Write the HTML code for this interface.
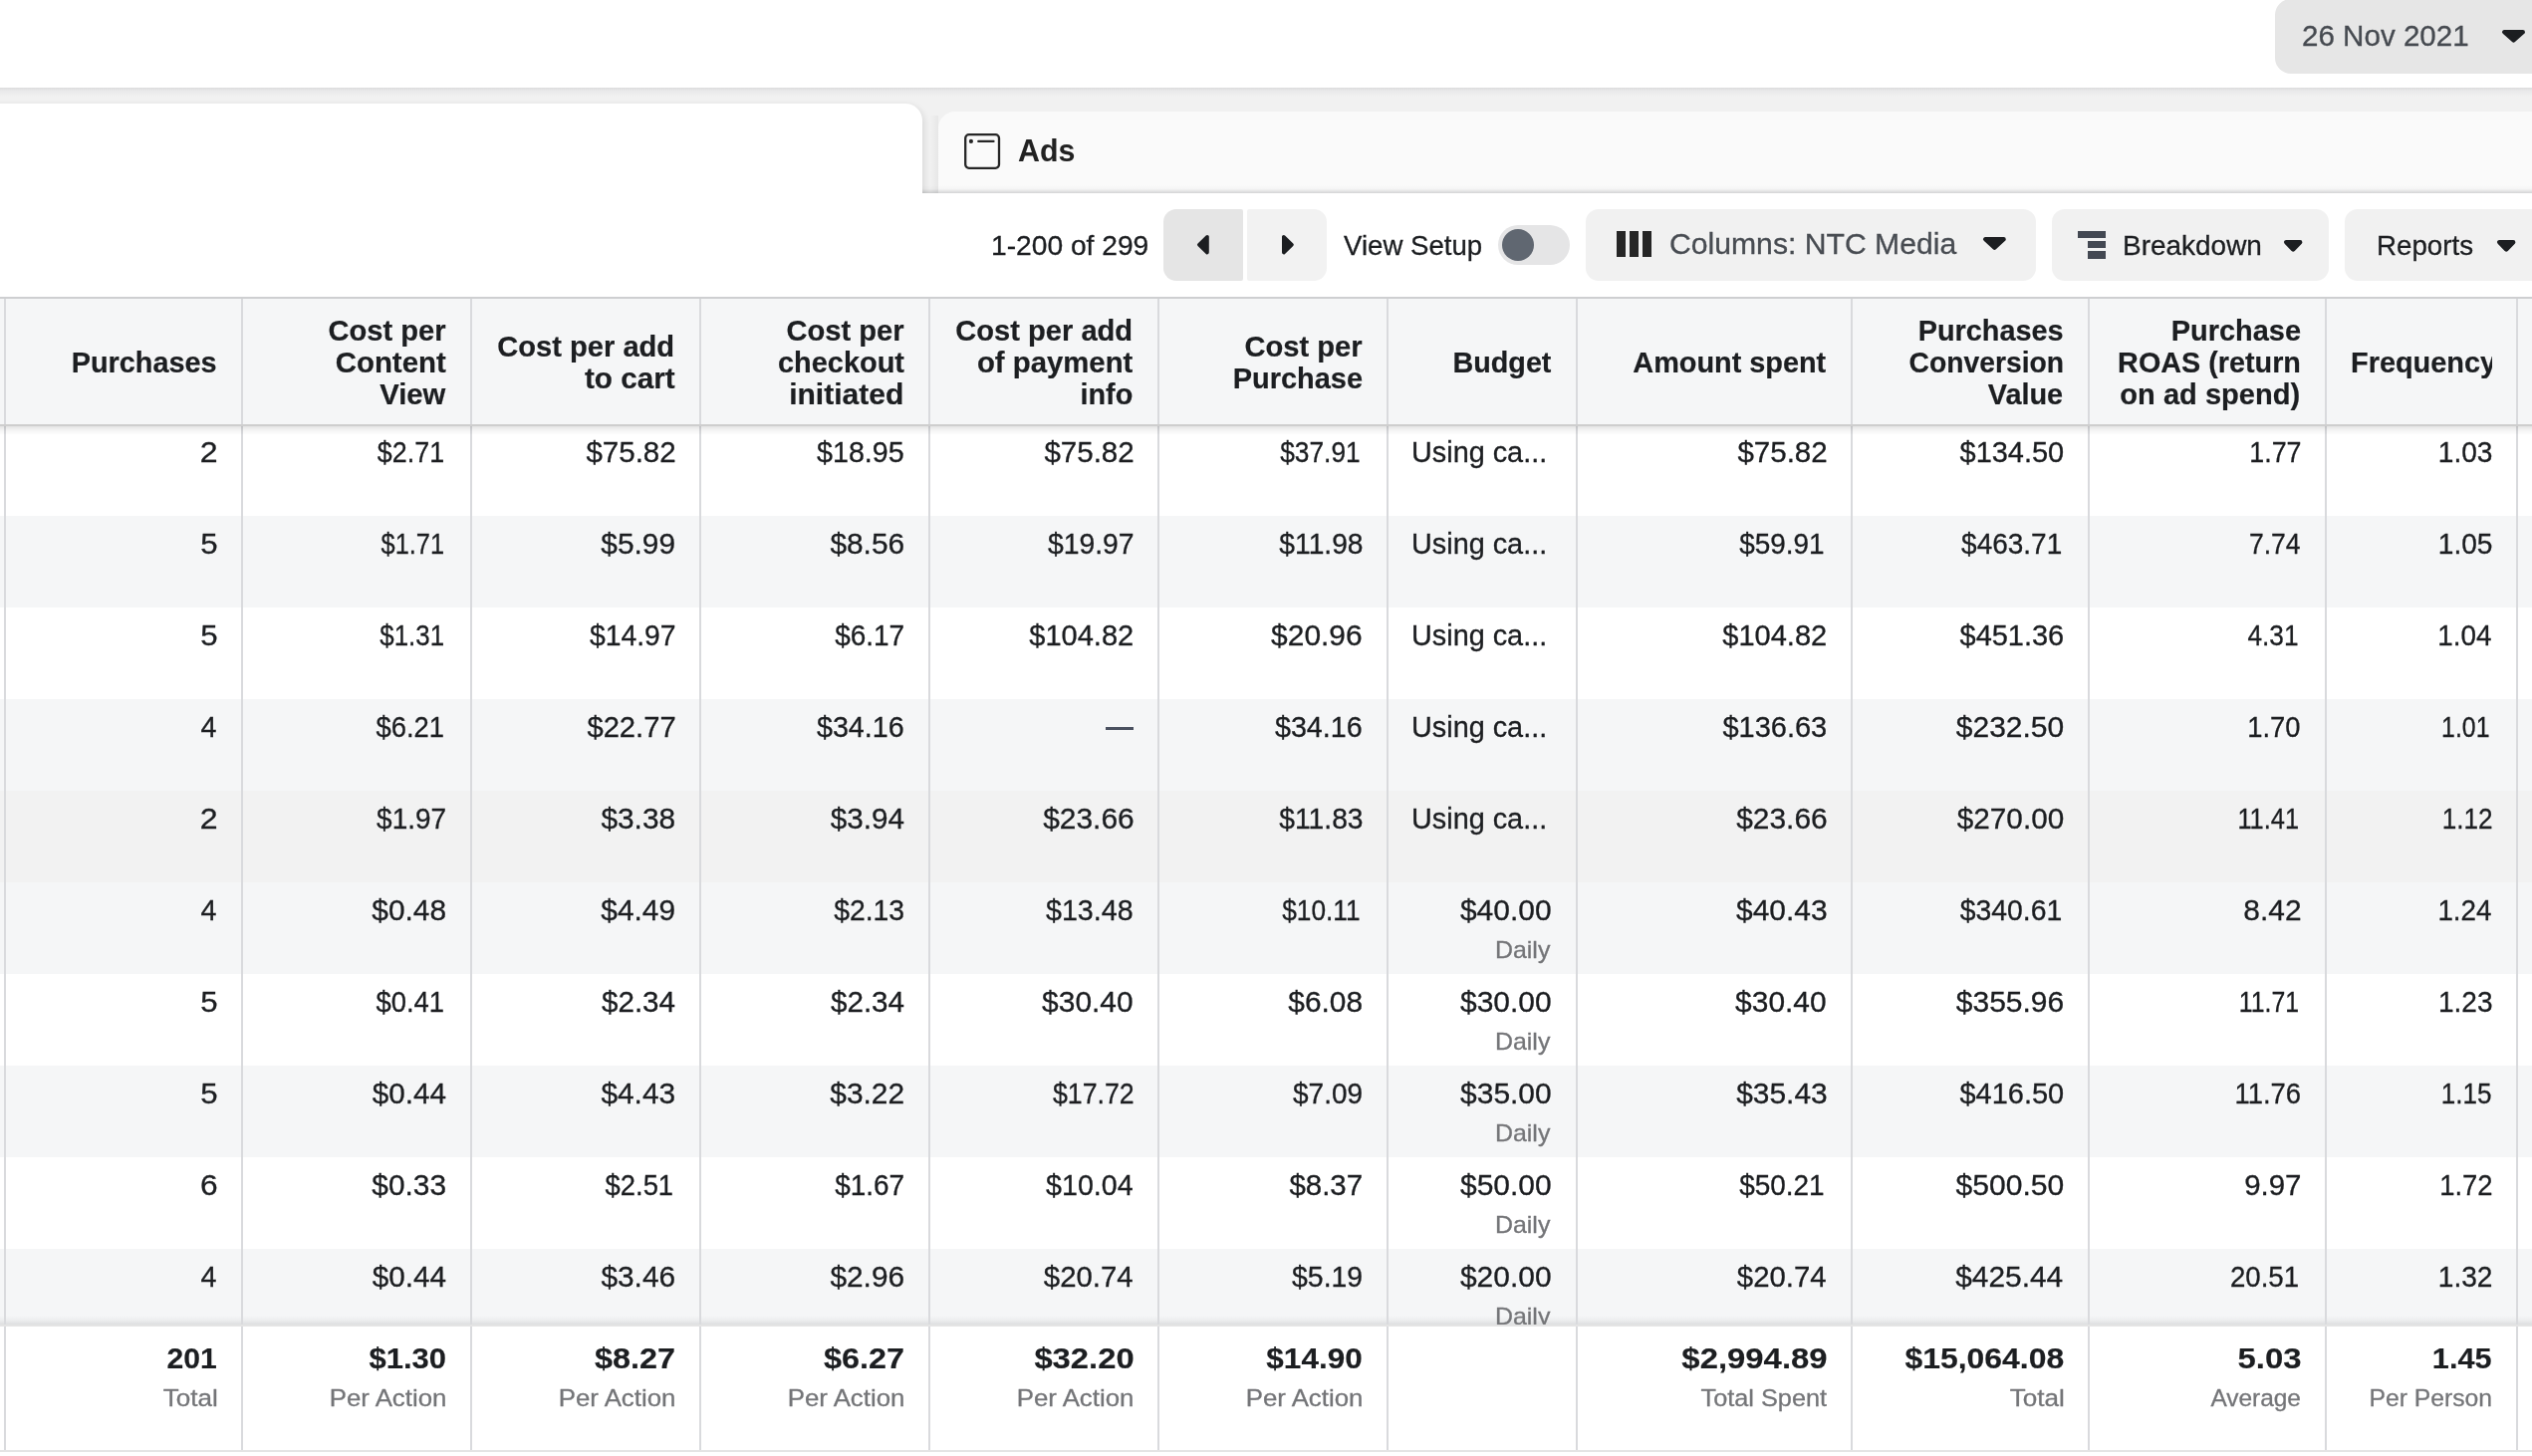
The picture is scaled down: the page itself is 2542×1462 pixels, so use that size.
<!DOCTYPE html><html><head><meta charset="utf-8"><title>Ads</title><style>

html,body{margin:0;padding:0;}
html{overflow:hidden;}
body{width:2542px;height:1462px;overflow:hidden;background:#fff;font-family:"Liberation Sans", sans-serif;position:relative;}
.t{position:absolute;white-space:nowrap;}
.a{position:absolute;}

</style></head><body><div id="wrap" style="position:absolute;left:0;top:0;width:2542px;height:1462px;overflow:hidden;will-change:transform;">
<div class="a" style="left:2284px;top:-1px;width:300px;height:75px;border-radius:16px;background:#e6e6e6;"></div>
<div class="t" id="t1" style="top:21.11px;font-size:30px;line-height:30px;color:#464a50;left:2311.00px;transform-origin:0 84.65%;transform:scale(0.9857,1.000);-webkit-text-stroke:0.3px #464a50;">26 Nov 2021</div>
<svg class="a" style="left:2510.0px;top:28.2px" width="27.0" height="16.4" viewBox="2510.0 28.2 27.0 16.4"><path d="M2514.20 32.40L2532.80 32.40L2523.50 40.62Z" fill="#1c1e21" stroke="#1c1e21" stroke-width="4.4" stroke-linejoin="round"/></svg>
<div class="a" style="left:0;top:88px;width:2542px;height:106px;background:#f1f1f1;"></div>
<div class="a" style="left:0;top:88px;width:2542px;height:9px;background:linear-gradient(#dcdcdd,#e9e9ea 35%,#f1f1f1);"></div>
<div class="a" style="left:0;top:88px;width:2542px;height:106px;overflow:hidden;"><div class="a" style="left:-20px;top:16px;width:946px;height:120px;border-radius:0 17px 0 0;background:#fff;box-shadow:2px 2px 7px rgba(0,0,0,0.10);"></div></div>
<div class="a" style="left:942px;top:112px;width:1700px;height:82px;border-radius:17px 0 0 0;background:#fafafa;"></div>
<div class="a" style="left:926px;top:186px;width:1616px;height:8px;background:linear-gradient(rgba(0,0,0,0),rgba(10,12,20,0.02) 45%,rgba(10,12,20,0.16));"></div>
<div class="a" style="left:934px;top:116px;width:8px;height:78px;background:linear-gradient(90deg,rgba(0,0,0,0),rgba(0,0,0,0.045));"></div>
<svg class="a" style="left:966px;top:132px" width="40" height="40" viewBox="966 132 40 40"><rect x="969.2" y="135.2" width="33.8" height="33.6" rx="3.6" ry="3.6" fill="none" stroke="#262626" stroke-width="2.3"/><circle cx="974.9" cy="141.9" r="2.1" fill="#262626"/><path d="M982.2 141.9H997.6" stroke="#262626" stroke-width="2.1" stroke-linecap="round"/></svg>
<div class="t" id="t2" style="top:134.71px;font-size:32px;line-height:32px;color:#222;font-weight:700;left:1021.50px;transform-origin:0 84.65%;transform:scale(0.9495,1.000);">Ads</div>
<div class="t" id="t3" style="top:232.50px;font-size:28px;line-height:28px;color:#1c1e21;left:995.00px;transform-origin:0 84.65%;transform:scale(1.0065,1.000);-webkit-text-stroke:0.3px #1c1e21;">1-200 of 299</div>
<div class="a" style="left:1168px;top:210px;width:80px;height:72px;border-radius:13px 2px 2px 13px;background:#e5e5e5;"></div>
<div class="a" style="left:1252px;top:210px;width:80px;height:72px;border-radius:2px 13px 13px 2px;background:#f2f2f2;"></div>
<svg class="a" style="left:1199.7px;top:234.3px" width="15.8" height="23.4" viewBox="1199.7 234.3 15.8 23.4"><path d="M1211.70 238.10L1211.70 253.90L1203.50 246.00Z" fill="#1c1e21" stroke="#1c1e21" stroke-width="3.6" stroke-linejoin="round"/></svg>
<svg class="a" style="left:1284.7px;top:234.3px" width="15.8" height="23.4" viewBox="1284.7 234.3 15.8 23.4"><path d="M1288.50 238.10L1288.50 253.90L1296.70 246.00Z" fill="#1c1e21" stroke="#1c1e21" stroke-width="3.6" stroke-linejoin="round"/></svg>
<div class="t" id="t4" style="top:232.50px;font-size:28px;line-height:28px;color:#1c1e21;left:1349.00px;transform-origin:0 84.65%;transform:scale(0.9857,1.000);-webkit-text-stroke:0.3px #1c1e21;">View Setup</div>
<div class="a" style="left:1504px;top:226px;width:72px;height:40px;border-radius:20px;background:#e5e5e6;"></div>
<div class="a" style="left:1508px;top:230px;width:32px;height:32px;border-radius:16px;background:#606771;"></div>
<div class="a" style="left:1592px;top:210px;width:452px;height:72px;border-radius:13px;background:#f1f1f1;"></div>
<div class="a" style="left:1622.7px;top:231.7px;width:8.9px;height:26px;background:#262626;"></div>
<div class="a" style="left:1635.9px;top:231.7px;width:8.9px;height:26px;background:#262626;"></div>
<div class="a" style="left:1649.1px;top:231.7px;width:8.9px;height:26px;background:#262626;"></div>
<div class="t" id="t5" style="top:229.91px;font-size:30px;line-height:30px;color:#484c52;left:1676.00px;transform-origin:0 84.65%;transform:scale(1.0049,1.000);-webkit-text-stroke:0.3px #484c52;">Columns: NTC Media</div>
<svg class="a" style="left:1988.9px;top:236.0px" width="26.8" height="16.6" viewBox="1988.9 236.0 26.8 16.6"><path d="M1993.10 240.20L2011.50 240.20L2002.30 248.62Z" fill="#1c1e21" stroke="#1c1e21" stroke-width="4.4" stroke-linejoin="round"/></svg>
<div class="a" style="left:2060px;top:210px;width:278px;height:72px;border-radius:13px;background:#f1f1f1;"></div>
<div class="a" style="left:2086px;top:232px;width:28.1px;height:7.4px;background:#434852;"></div>
<div class="a" style="left:2096.1px;top:242.1px;width:18px;height:7.4px;background:#434852;"></div>
<div class="a" style="left:2096.1px;top:252.3px;width:18px;height:7.5px;background:#434852;"></div>
<div class="t" id="t6" style="top:232.90px;font-size:28px;line-height:28px;color:#1c1e21;left:2131.00px;transform-origin:0 84.65%;transform:scale(0.9985,1.000);-webkit-text-stroke:0.3px #1c1e21;">Breakdown</div>
<svg class="a" style="left:2290.8px;top:239.1px" width="22.4" height="15.4" viewBox="2290.8 239.1 22.4 15.4"><path d="M2295.00 243.30L2309.00 243.30L2302.00 250.52Z" fill="#1c1e21" stroke="#1c1e21" stroke-width="4.4" stroke-linejoin="round"/></svg>
<div class="a" style="left:2354px;top:210px;width:300px;height:72px;border-radius:13px;background:#f1f1f1;"></div>
<div class="t" id="t7" style="top:232.90px;font-size:28px;line-height:28px;color:#1c1e21;left:2386.00px;transform-origin:0 84.65%;transform:scale(0.9895,1.000);-webkit-text-stroke:0.3px #1c1e21;">Reports</div>
<svg class="a" style="left:2504.9px;top:239.1px" width="22.4" height="15.4" viewBox="2504.9 239.1 22.4 15.4"><path d="M2509.10 243.30L2523.10 243.30L2516.10 250.52Z" fill="#1c1e21" stroke="#1c1e21" stroke-width="4.4" stroke-linejoin="round"/></svg>
<div class="a" style="left:0;top:298px;width:2542px;height:128px;background:#f5f6f7;"></div>
<div class="a" style="left:0;top:518px;width:2542px;height:92px;background:#f5f6f7;"></div>
<div class="a" style="left:0;top:702px;width:2542px;height:92px;background:#f5f6f7;"></div>
<div class="a" style="left:0;top:794px;width:2542px;height:92px;background:#f2f2f2;"></div>
<div class="a" style="left:0;top:886px;width:2542px;height:92px;background:#f5f6f7;"></div>
<div class="a" style="left:0;top:1070px;width:2542px;height:92px;background:#f5f6f7;"></div>
<div class="a" style="left:0;top:1254px;width:2542px;height:92px;background:#f5f6f7;"></div>
<div class="a" style="left:0;top:1321px;width:2542px;height:9px;background:linear-gradient(rgba(0,0,0,0),rgba(10,12,20,0.035) 50%,rgba(10,12,20,0.10));"></div>
<div class="t" id="t8" style="top:440.50px;font-size:28px;line-height:28px;color:#1c1e21;right:2323.60px;transform-origin:100% 84.65%;transform:scale(1.1466,1.035);-webkit-text-stroke:0.3px #1c1e21;">2</div>
<div class="t" id="t9" style="top:440.50px;font-size:28px;line-height:28px;color:#1c1e21;right:2096.32px;transform-origin:100% 84.65%;transform:scale(0.9592,1.035);-webkit-text-stroke:0.3px #1c1e21;">$2.71</div>
<div class="t" id="t10" style="top:440.50px;font-size:28px;line-height:28px;color:#1c1e21;right:1863.77px;transform-origin:100% 84.65%;transform:scale(1.0537,1.035);-webkit-text-stroke:0.3px #1c1e21;">$75.82</div>
<div class="t" id="t11" style="top:440.50px;font-size:28px;line-height:28px;color:#1c1e21;right:1633.98px;transform-origin:100% 84.65%;transform:scale(1.0230,1.035);-webkit-text-stroke:0.3px #1c1e21;">$18.95</div>
<div class="t" id="t12" style="top:440.50px;font-size:28px;line-height:28px;color:#1c1e21;right:1403.77px;transform-origin:100% 84.65%;transform:scale(1.0537,1.035);-webkit-text-stroke:0.3px #1c1e21;">$75.82</div>
<div class="t" id="t13" style="top:440.50px;font-size:28px;line-height:28px;color:#1c1e21;right:1176.35px;transform-origin:100% 84.65%;transform:scale(0.9396,1.035);-webkit-text-stroke:0.3px #1c1e21;">$37.91</div>
<div class="t" id="t14" style="top:440.50px;font-size:28px;line-height:28px;color:#1c1e21;left:1416.50px;transform-origin:0 84.65%;transform:scale(1.0295,1.035);-webkit-text-stroke:0.3px #1c1e21;">Using ca...</div>
<div class="t" id="t15" style="top:440.50px;font-size:28px;line-height:28px;color:#1c1e21;right:707.77px;transform-origin:100% 84.65%;transform:scale(1.0537,1.035);-webkit-text-stroke:0.3px #1c1e21;">$75.82</div>
<div class="t" id="t16" style="top:440.50px;font-size:28px;line-height:28px;color:#1c1e21;right:470.07px;transform-origin:100% 84.65%;transform:scale(1.0342,1.035);-webkit-text-stroke:0.3px #1c1e21;">$134.50</div>
<div class="t" id="t17" style="top:440.50px;font-size:28px;line-height:28px;color:#1c1e21;right:231.69px;transform-origin:100% 84.65%;transform:scale(0.9582,1.035);-webkit-text-stroke:0.3px #1c1e21;">1.77</div>
<div class="t" id="t18" style="top:440.50px;font-size:28px;line-height:28px;color:#1c1e21;right:39.96px;transform-origin:100% 84.65%;transform:scale(1.0035,1.035);-webkit-text-stroke:0.3px #1c1e21;">1.03</div>
<div class="t" id="t19" style="top:532.50px;font-size:28px;line-height:28px;color:#1c1e21;right:2323.85px;transform-origin:100% 84.65%;transform:scale(1.1124,1.035);-webkit-text-stroke:0.3px #1c1e21;">5</div>
<div class="t" id="t20" style="top:532.50px;font-size:28px;line-height:28px;color:#1c1e21;right:2096.37px;transform-origin:100% 84.65%;transform:scale(0.9064,1.035);-webkit-text-stroke:0.3px #1c1e21;">$1.71</div>
<div class="t" id="t21" style="top:532.50px;font-size:28px;line-height:28px;color:#1c1e21;right:1863.77px;transform-origin:100% 84.65%;transform:scale(1.0668,1.035);-webkit-text-stroke:0.3px #1c1e21;">$5.99</div>
<div class="t" id="t22" style="top:532.50px;font-size:28px;line-height:28px;color:#1c1e21;right:1633.85px;transform-origin:100% 84.65%;transform:scale(1.0654,1.035);-webkit-text-stroke:0.3px #1c1e21;">$8.56</div>
<div class="t" id="t23" style="top:532.50px;font-size:28px;line-height:28px;color:#1c1e21;right:1403.59px;transform-origin:100% 84.65%;transform:scale(1.0131,1.035);-webkit-text-stroke:0.3px #1c1e21;">$19.97</div>
<div class="t" id="t24" style="top:532.50px;font-size:28px;line-height:28px;color:#1c1e21;right:1173.94px;transform-origin:100% 84.65%;transform:scale(1.0079,1.035);-webkit-text-stroke:0.3px #1c1e21;">$11.98</div>
<div class="t" id="t25" style="top:532.50px;font-size:28px;line-height:28px;color:#1c1e21;left:1416.50px;transform-origin:0 84.65%;transform:scale(1.0295,1.035);-webkit-text-stroke:0.3px #1c1e21;">Using ca...</div>
<div class="t" id="t26" style="top:532.50px;font-size:28px;line-height:28px;color:#1c1e21;right:710.24px;transform-origin:100% 84.65%;transform:scale(0.9967,1.035);-webkit-text-stroke:0.3px #1c1e21;">$59.91</div>
<div class="t" id="t27" style="top:532.50px;font-size:28px;line-height:28px;color:#1c1e21;right:472.24px;transform-origin:100% 84.65%;transform:scale(0.9990,1.035);-webkit-text-stroke:0.3px #1c1e21;">$463.71</div>
<div class="t" id="t28" style="top:532.50px;font-size:28px;line-height:28px;color:#1c1e21;right:232.42px;transform-origin:100% 84.65%;transform:scale(0.9459,1.035);-webkit-text-stroke:0.3px #1c1e21;">7.74</div>
<div class="t" id="t29" style="top:532.50px;font-size:28px;line-height:28px;color:#1c1e21;right:39.98px;transform-origin:100% 84.65%;transform:scale(1.0035,1.035);-webkit-text-stroke:0.3px #1c1e21;">1.05</div>
<div class="t" id="t30" style="top:624.50px;font-size:28px;line-height:28px;color:#1c1e21;right:2323.85px;transform-origin:100% 84.65%;transform:scale(1.1124,1.035);-webkit-text-stroke:0.3px #1c1e21;">5</div>
<div class="t" id="t31" style="top:624.50px;font-size:28px;line-height:28px;color:#1c1e21;right:2096.36px;transform-origin:100% 84.65%;transform:scale(0.9241,1.035);-webkit-text-stroke:0.3px #1c1e21;">$1.31</div>
<div class="t" id="t32" style="top:624.50px;font-size:28px;line-height:28px;color:#1c1e21;right:1863.62px;transform-origin:100% 84.65%;transform:scale(1.0126,1.035);-webkit-text-stroke:0.3px #1c1e21;">$14.97</div>
<div class="t" id="t33" style="top:624.50px;font-size:28px;line-height:28px;color:#1c1e21;right:1633.64px;transform-origin:100% 84.65%;transform:scale(0.9977,1.035);-webkit-text-stroke:0.3px #1c1e21;">$6.17</div>
<div class="t" id="t34" style="top:624.50px;font-size:28px;line-height:28px;color:#1c1e21;right:1403.79px;transform-origin:100% 84.65%;transform:scale(1.0369,1.035);-webkit-text-stroke:0.3px #1c1e21;">$104.82</div>
<div class="t" id="t35" style="top:624.50px;font-size:28px;line-height:28px;color:#1c1e21;right:1173.89px;transform-origin:100% 84.65%;transform:scale(1.0688,1.035);-webkit-text-stroke:0.3px #1c1e21;">$20.96</div>
<div class="t" id="t36" style="top:624.50px;font-size:28px;line-height:28px;color:#1c1e21;left:1416.50px;transform-origin:0 84.65%;transform:scale(1.0295,1.035);-webkit-text-stroke:0.3px #1c1e21;">Using ca...</div>
<div class="t" id="t37" style="top:624.50px;font-size:28px;line-height:28px;color:#1c1e21;right:707.79px;transform-origin:100% 84.65%;transform:scale(1.0369,1.035);-webkit-text-stroke:0.3px #1c1e21;">$104.82</div>
<div class="t" id="t38" style="top:624.50px;font-size:28px;line-height:28px;color:#1c1e21;right:469.92px;transform-origin:100% 84.65%;transform:scale(1.0341,1.035);-webkit-text-stroke:0.3px #1c1e21;">$451.36</div>
<div class="t" id="t39" style="top:624.50px;font-size:28px;line-height:28px;color:#1c1e21;right:234.36px;transform-origin:100% 84.65%;transform:scale(0.9370,1.035);-webkit-text-stroke:0.3px #1c1e21;">4.31</div>
<div class="t" id="t40" style="top:624.50px;font-size:28px;line-height:28px;color:#1c1e21;right:40.38px;transform-origin:100% 84.65%;transform:scale(0.9954,1.035);-webkit-text-stroke:0.3px #1c1e21;">1.04</div>
<div class="t" id="t41" style="top:716.50px;font-size:28px;line-height:28px;color:#1c1e21;right:2324.36px;transform-origin:100% 84.65%;transform:scale(1.0261,1.035);-webkit-text-stroke:0.3px #1c1e21;">4</div>
<div class="t" id="t42" style="top:716.50px;font-size:28px;line-height:28px;color:#1c1e21;right:2096.28px;transform-origin:100% 84.65%;transform:scale(0.9782,1.035);-webkit-text-stroke:0.3px #1c1e21;">$6.21</div>
<div class="t" id="t43" style="top:716.50px;font-size:28px;line-height:28px;color:#1c1e21;right:1863.56px;transform-origin:100% 84.65%;transform:scale(1.0417,1.035);-webkit-text-stroke:0.3px #1c1e21;">$22.77</div>
<div class="t" id="t44" style="top:716.50px;font-size:28px;line-height:28px;color:#1c1e21;right:1633.90px;transform-origin:100% 84.65%;transform:scale(1.0241,1.035);-webkit-text-stroke:0.3px #1c1e21;">$34.16</div>
<div class="a" style="left:1110.0px;top:730.4px;width:28px;height:2.5px;background:#4b5160;"></div>
<div class="t" id="t45" style="top:716.50px;font-size:28px;line-height:28px;color:#1c1e21;right:1173.90px;transform-origin:100% 84.65%;transform:scale(1.0241,1.035);-webkit-text-stroke:0.3px #1c1e21;">$34.16</div>
<div class="t" id="t46" style="top:716.50px;font-size:28px;line-height:28px;color:#1c1e21;left:1416.50px;transform-origin:0 84.65%;transform:scale(1.0295,1.035);-webkit-text-stroke:0.3px #1c1e21;">Using ca...</div>
<div class="t" id="t47" style="top:716.50px;font-size:28px;line-height:28px;color:#1c1e21;right:707.89px;transform-origin:100% 84.65%;transform:scale(1.0347,1.035);-webkit-text-stroke:0.3px #1c1e21;">$136.63</div>
<div class="t" id="t48" style="top:716.50px;font-size:28px;line-height:28px;color:#1c1e21;right:470.03px;transform-origin:100% 84.65%;transform:scale(1.0710,1.035);-webkit-text-stroke:0.3px #1c1e21;">$232.50</div>
<div class="t" id="t49" style="top:716.50px;font-size:28px;line-height:28px;color:#1c1e21;right:232.12px;transform-origin:100% 84.65%;transform:scale(0.9768,1.035);-webkit-text-stroke:0.3px #1c1e21;">1.70</div>
<div class="t" id="t50" style="top:716.50px;font-size:28px;line-height:28px;color:#1c1e21;right:42.38px;transform-origin:100% 84.65%;transform:scale(0.8879,1.035);-webkit-text-stroke:0.3px #1c1e21;">1.01</div>
<div class="t" id="t51" style="top:808.50px;font-size:28px;line-height:28px;color:#1c1e21;right:2323.60px;transform-origin:100% 84.65%;transform:scale(1.1466,1.035);-webkit-text-stroke:0.3px #1c1e21;">2</div>
<div class="t" id="t52" style="top:808.50px;font-size:28px;line-height:28px;color:#1c1e21;right:2093.59px;transform-origin:100% 84.65%;transform:scale(0.9988,1.035);-webkit-text-stroke:0.3px #1c1e21;">$1.97</div>
<div class="t" id="t53" style="top:808.50px;font-size:28px;line-height:28px;color:#1c1e21;right:1863.86px;transform-origin:100% 84.65%;transform:scale(1.0655,1.035);-webkit-text-stroke:0.3px #1c1e21;">$3.38</div>
<div class="t" id="t54" style="top:808.50px;font-size:28px;line-height:28px;color:#1c1e21;right:1634.33px;transform-origin:100% 84.65%;transform:scale(1.0589,1.035);-webkit-text-stroke:0.3px #1c1e21;">$3.94</div>
<div class="t" id="t55" style="top:808.50px;font-size:28px;line-height:28px;color:#1c1e21;right:1403.84px;transform-origin:100% 84.65%;transform:scale(1.0678,1.035);-webkit-text-stroke:0.3px #1c1e21;">$23.66</div>
<div class="t" id="t56" style="top:808.50px;font-size:28px;line-height:28px;color:#1c1e21;right:1173.91px;transform-origin:100% 84.65%;transform:scale(1.0083,1.035);-webkit-text-stroke:0.3px #1c1e21;">$11.83</div>
<div class="t" id="t57" style="top:808.50px;font-size:28px;line-height:28px;color:#1c1e21;left:1416.50px;transform-origin:0 84.65%;transform:scale(1.0295,1.035);-webkit-text-stroke:0.3px #1c1e21;">Using ca...</div>
<div class="t" id="t58" style="top:808.50px;font-size:28px;line-height:28px;color:#1c1e21;right:707.84px;transform-origin:100% 84.65%;transform:scale(1.0678,1.035);-webkit-text-stroke:0.3px #1c1e21;">$23.66</div>
<div class="t" id="t59" style="top:808.50px;font-size:28px;line-height:28px;color:#1c1e21;right:470.03px;transform-origin:100% 84.65%;transform:scale(1.0618,1.035);-webkit-text-stroke:0.3px #1c1e21;">$270.00</div>
<div class="t" id="t60" style="top:808.50px;font-size:28px;line-height:28px;color:#1c1e21;right:234.35px;transform-origin:100% 84.65%;transform:scale(0.9061,1.035);-webkit-text-stroke:0.3px #1c1e21;">11.41</div>
<div class="t" id="t61" style="top:808.50px;font-size:28px;line-height:28px;color:#1c1e21;right:39.89px;transform-origin:100% 84.65%;transform:scale(0.9329,1.035);-webkit-text-stroke:0.3px #1c1e21;">1.12</div>
<div class="t" id="t62" style="top:900.50px;font-size:28px;line-height:28px;color:#1c1e21;right:2324.36px;transform-origin:100% 84.65%;transform:scale(1.0261,1.035);-webkit-text-stroke:0.3px #1c1e21;">4</div>
<div class="t" id="t63" style="top:900.50px;font-size:28px;line-height:28px;color:#1c1e21;right:2093.87px;transform-origin:100% 84.65%;transform:scale(1.0673,1.035);-webkit-text-stroke:0.3px #1c1e21;">$0.48</div>
<div class="t" id="t64" style="top:900.50px;font-size:28px;line-height:28px;color:#1c1e21;right:1863.77px;transform-origin:100% 84.65%;transform:scale(1.0668,1.035);-webkit-text-stroke:0.3px #1c1e21;">$4.49</div>
<div class="t" id="t65" style="top:900.50px;font-size:28px;line-height:28px;color:#1c1e21;right:1633.92px;transform-origin:100% 84.65%;transform:scale(1.0120,1.035);-webkit-text-stroke:0.3px #1c1e21;">$2.13</div>
<div class="t" id="t66" style="top:900.50px;font-size:28px;line-height:28px;color:#1c1e21;right:1403.92px;transform-origin:100% 84.65%;transform:scale(1.0239,1.035);-webkit-text-stroke:0.3px #1c1e21;">$13.48</div>
<div class="t" id="t67" style="top:900.50px;font-size:28px;line-height:28px;color:#1c1e21;right:1176.32px;transform-origin:100% 84.65%;transform:scale(0.9371,1.035);-webkit-text-stroke:0.3px #1c1e21;">$10.11</div>
<div class="t" id="t68" style="top:900.50px;font-size:28px;line-height:28px;color:#1c1e21;right:984.03px;transform-origin:100% 84.65%;transform:scale(1.0707,1.035);-webkit-text-stroke:0.3px #1c1e21;">$40.00</div>
<div class="t" id="t69" style="top:941.68px;font-size:24px;line-height:24px;color:#747578;right:985.40px;transform-origin:100% 84.65%;transform:scale(1.0385,1.000);-webkit-text-stroke:0.3px #747578;">Daily</div>
<div class="t" id="t70" style="top:900.50px;font-size:28px;line-height:28px;color:#1c1e21;right:707.85px;transform-origin:100% 84.65%;transform:scale(1.0693,1.035);-webkit-text-stroke:0.3px #1c1e21;">$40.43</div>
<div class="t" id="t71" style="top:900.50px;font-size:28px;line-height:28px;color:#1c1e21;right:472.22px;transform-origin:100% 84.65%;transform:scale(1.0131,1.035);-webkit-text-stroke:0.3px #1c1e21;">$340.61</div>
<div class="t" id="t72" style="top:900.50px;font-size:28px;line-height:28px;color:#1c1e21;right:231.72px;transform-origin:100% 84.65%;transform:scale(1.0672,1.035);-webkit-text-stroke:0.3px #1c1e21;">8.42</div>
<div class="t" id="t73" style="top:900.50px;font-size:28px;line-height:28px;color:#1c1e21;right:40.39px;transform-origin:100% 84.65%;transform:scale(0.9930,1.035);-webkit-text-stroke:0.3px #1c1e21;">1.24</div>
<div class="t" id="t74" style="top:992.50px;font-size:28px;line-height:28px;color:#1c1e21;right:2323.85px;transform-origin:100% 84.65%;transform:scale(1.1124,1.035);-webkit-text-stroke:0.3px #1c1e21;">5</div>
<div class="t" id="t75" style="top:992.50px;font-size:28px;line-height:28px;color:#1c1e21;right:2096.30px;transform-origin:100% 84.65%;transform:scale(0.9797,1.035);-webkit-text-stroke:0.3px #1c1e21;">$0.41</div>
<div class="t" id="t76" style="top:992.50px;font-size:28px;line-height:28px;color:#1c1e21;right:1864.34px;transform-origin:100% 84.65%;transform:scale(1.0579,1.035);-webkit-text-stroke:0.3px #1c1e21;">$2.34</div>
<div class="t" id="t77" style="top:992.50px;font-size:28px;line-height:28px;color:#1c1e21;right:1634.34px;transform-origin:100% 84.65%;transform:scale(1.0579,1.035);-webkit-text-stroke:0.3px #1c1e21;">$2.34</div>
<div class="t" id="t78" style="top:992.50px;font-size:28px;line-height:28px;color:#1c1e21;right:1404.03px;transform-origin:100% 84.65%;transform:scale(1.0688,1.035);-webkit-text-stroke:0.3px #1c1e21;">$30.40</div>
<div class="t" id="t79" style="top:992.50px;font-size:28px;line-height:28px;color:#1c1e21;right:1173.91px;transform-origin:100% 84.65%;transform:scale(1.0665,1.035);-webkit-text-stroke:0.3px #1c1e21;">$6.08</div>
<div class="t" id="t80" style="top:992.50px;font-size:28px;line-height:28px;color:#1c1e21;right:984.03px;transform-origin:100% 84.65%;transform:scale(1.0706,1.035);-webkit-text-stroke:0.3px #1c1e21;">$30.00</div>
<div class="t" id="t81" style="top:1033.68px;font-size:24px;line-height:24px;color:#747578;right:985.40px;transform-origin:100% 84.65%;transform:scale(1.0385,1.000);-webkit-text-stroke:0.3px #747578;">Daily</div>
<div class="t" id="t82" style="top:992.50px;font-size:28px;line-height:28px;color:#1c1e21;right:708.03px;transform-origin:100% 84.65%;transform:scale(1.0688,1.035);-webkit-text-stroke:0.3px #1c1e21;">$30.40</div>
<div class="t" id="t83" style="top:992.50px;font-size:28px;line-height:28px;color:#1c1e21;right:469.88px;transform-origin:100% 84.65%;transform:scale(1.0707,1.035);-webkit-text-stroke:0.3px #1c1e21;">$355.96</div>
<div class="t" id="t84" style="top:992.50px;font-size:28px;line-height:28px;color:#1c1e21;right:234.42px;transform-origin:100% 84.65%;transform:scale(0.8854,1.035);-webkit-text-stroke:0.3px #1c1e21;">11.71</div>
<div class="t" id="t85" style="top:992.50px;font-size:28px;line-height:28px;color:#1c1e21;right:39.96px;transform-origin:100% 84.65%;transform:scale(1.0006,1.035);-webkit-text-stroke:0.3px #1c1e21;">1.23</div>
<div class="t" id="t86" style="top:1084.50px;font-size:28px;line-height:28px;color:#1c1e21;right:2323.85px;transform-origin:100% 84.65%;transform:scale(1.1124,1.035);-webkit-text-stroke:0.3px #1c1e21;">5</div>
<div class="t" id="t87" style="top:1084.50px;font-size:28px;line-height:28px;color:#1c1e21;right:2094.33px;transform-origin:100% 84.65%;transform:scale(1.0607,1.035);-webkit-text-stroke:0.3px #1c1e21;">$0.44</div>
<div class="t" id="t88" style="top:1084.50px;font-size:28px;line-height:28px;color:#1c1e21;right:1863.85px;transform-origin:100% 84.65%;transform:scale(1.0654,1.035);-webkit-text-stroke:0.3px #1c1e21;">$4.43</div>
<div class="t" id="t89" style="top:1084.50px;font-size:28px;line-height:28px;color:#1c1e21;right:1633.72px;transform-origin:100% 84.65%;transform:scale(1.0672,1.035);-webkit-text-stroke:0.3px #1c1e21;">$3.22</div>
<div class="t" id="t90" style="top:1084.50px;font-size:28px;line-height:28px;color:#1c1e21;right:1403.87px;transform-origin:100% 84.65%;transform:scale(0.9542,1.035);-webkit-text-stroke:0.3px #1c1e21;">$17.72</div>
<div class="t" id="t91" style="top:1084.50px;font-size:28px;line-height:28px;color:#1c1e21;right:1173.85px;transform-origin:100% 84.65%;transform:scale(0.9993,1.035);-webkit-text-stroke:0.3px #1c1e21;">$7.09</div>
<div class="t" id="t92" style="top:1084.50px;font-size:28px;line-height:28px;color:#1c1e21;right:984.03px;transform-origin:100% 84.65%;transform:scale(1.0689,1.035);-webkit-text-stroke:0.3px #1c1e21;">$35.00</div>
<div class="t" id="t93" style="top:1125.68px;font-size:24px;line-height:24px;color:#747578;right:985.40px;transform-origin:100% 84.65%;transform:scale(1.0385,1.000);-webkit-text-stroke:0.3px #747578;">Daily</div>
<div class="t" id="t94" style="top:1084.50px;font-size:28px;line-height:28px;color:#1c1e21;right:707.85px;transform-origin:100% 84.65%;transform:scale(1.0675,1.035);-webkit-text-stroke:0.3px #1c1e21;">$35.43</div>
<div class="t" id="t95" style="top:1084.50px;font-size:28px;line-height:28px;color:#1c1e21;right:470.07px;transform-origin:100% 84.65%;transform:scale(1.0345,1.035);-webkit-text-stroke:0.3px #1c1e21;">$416.50</div>
<div class="t" id="t96" style="top:1084.50px;font-size:28px;line-height:28px;color:#1c1e21;right:231.96px;transform-origin:100% 84.65%;transform:scale(0.9785,1.035);-webkit-text-stroke:0.3px #1c1e21;">11.76</div>
<div class="t" id="t97" style="top:1084.50px;font-size:28px;line-height:28px;color:#1c1e21;right:40.06px;transform-origin:100% 84.65%;transform:scale(0.9294,1.035);-webkit-text-stroke:0.3px #1c1e21;">1.15</div>
<div class="t" id="t98" style="top:1176.50px;font-size:28px;line-height:28px;color:#1c1e21;right:2323.82px;transform-origin:100% 84.65%;transform:scale(1.1305,1.035);-webkit-text-stroke:0.3px #1c1e21;">6</div>
<div class="t" id="t99" style="top:1176.50px;font-size:28px;line-height:28px;color:#1c1e21;right:2093.89px;transform-origin:100% 84.65%;transform:scale(1.0666,1.035);-webkit-text-stroke:0.3px #1c1e21;">$0.33</div>
<div class="t" id="t100" style="top:1176.50px;font-size:28px;line-height:28px;color:#1c1e21;right:1866.30px;transform-origin:100% 84.65%;transform:scale(0.9773,1.035);-webkit-text-stroke:0.3px #1c1e21;">$2.51</div>
<div class="t" id="t101" style="top:1176.50px;font-size:28px;line-height:28px;color:#1c1e21;right:1633.64px;transform-origin:100% 84.65%;transform:scale(0.9977,1.035);-webkit-text-stroke:0.3px #1c1e21;">$1.67</div>
<div class="t" id="t102" style="top:1176.50px;font-size:28px;line-height:28px;color:#1c1e21;right:1404.37px;transform-origin:100% 84.65%;transform:scale(1.0220,1.035);-webkit-text-stroke:0.3px #1c1e21;">$10.04</div>
<div class="t" id="t103" style="top:1176.50px;font-size:28px;line-height:28px;color:#1c1e21;right:1173.58px;transform-origin:100% 84.65%;transform:scale(1.0511,1.035);-webkit-text-stroke:0.3px #1c1e21;">$8.37</div>
<div class="t" id="t104" style="top:1176.50px;font-size:28px;line-height:28px;color:#1c1e21;right:984.03px;transform-origin:100% 84.65%;transform:scale(1.0706,1.035);-webkit-text-stroke:0.3px #1c1e21;">$50.00</div>
<div class="t" id="t105" style="top:1217.68px;font-size:24px;line-height:24px;color:#747578;right:985.40px;transform-origin:100% 84.65%;transform:scale(1.0385,1.000);-webkit-text-stroke:0.3px #747578;">Daily</div>
<div class="t" id="t106" style="top:1176.50px;font-size:28px;line-height:28px;color:#1c1e21;right:710.28px;transform-origin:100% 84.65%;transform:scale(0.9979,1.035);-webkit-text-stroke:0.3px #1c1e21;">$50.21</div>
<div class="t" id="t107" style="top:1176.50px;font-size:28px;line-height:28px;color:#1c1e21;right:470.03px;transform-origin:100% 84.65%;transform:scale(1.0737,1.035);-webkit-text-stroke:0.3px #1c1e21;">$500.50</div>
<div class="t" id="t108" style="top:1176.50px;font-size:28px;line-height:28px;color:#1c1e21;right:231.58px;transform-origin:100% 84.65%;transform:scale(1.0514,1.035);-webkit-text-stroke:0.3px #1c1e21;">9.97</div>
<div class="t" id="t109" style="top:1176.50px;font-size:28px;line-height:28px;color:#1c1e21;right:39.87px;transform-origin:100% 84.65%;transform:scale(0.9787,1.035);-webkit-text-stroke:0.3px #1c1e21;">1.72</div>
<div class="t" id="t110" style="top:1268.50px;font-size:28px;line-height:28px;color:#1c1e21;right:2324.36px;transform-origin:100% 84.65%;transform:scale(1.0261,1.035);-webkit-text-stroke:0.3px #1c1e21;">4</div>
<div class="t" id="t111" style="top:1268.50px;font-size:28px;line-height:28px;color:#1c1e21;right:2094.33px;transform-origin:100% 84.65%;transform:scale(1.0607,1.035);-webkit-text-stroke:0.3px #1c1e21;">$0.44</div>
<div class="t" id="t112" style="top:1268.50px;font-size:28px;line-height:28px;color:#1c1e21;right:1863.85px;transform-origin:100% 84.65%;transform:scale(1.0654,1.035);-webkit-text-stroke:0.3px #1c1e21;">$3.46</div>
<div class="t" id="t113" style="top:1268.50px;font-size:28px;line-height:28px;color:#1c1e21;right:1633.85px;transform-origin:100% 84.65%;transform:scale(1.0654,1.035);-webkit-text-stroke:0.3px #1c1e21;">$2.96</div>
<div class="t" id="t114" style="top:1268.50px;font-size:28px;line-height:28px;color:#1c1e21;right:1404.34px;transform-origin:100% 84.65%;transform:scale(1.0488,1.035);-webkit-text-stroke:0.3px #1c1e21;">$20.74</div>
<div class="t" id="t115" style="top:1268.50px;font-size:28px;line-height:28px;color:#1c1e21;right:1173.83px;transform-origin:100% 84.65%;transform:scale(1.0132,1.035);-webkit-text-stroke:0.3px #1c1e21;">$5.19</div>
<div class="t" id="t116" style="top:1268.50px;font-size:28px;line-height:28px;color:#1c1e21;right:984.03px;transform-origin:100% 84.65%;transform:scale(1.0707,1.035);-webkit-text-stroke:0.3px #1c1e21;">$20.00</div>
<div class="t" id="t117" style="top:1309.68px;font-size:24px;line-height:24px;color:#747578;right:985.40px;transform-origin:100% 84.65%;transform:scale(1.0385,1.000);-webkit-text-stroke:0.3px #747578;">Daily</div>
<div class="t" id="t118" style="top:1268.50px;font-size:28px;line-height:28px;color:#1c1e21;right:708.34px;transform-origin:100% 84.65%;transform:scale(1.0488,1.035);-webkit-text-stroke:0.3px #1c1e21;">$20.74</div>
<div class="t" id="t119" style="top:1268.50px;font-size:28px;line-height:28px;color:#1c1e21;right:470.33px;transform-origin:100% 84.65%;transform:scale(1.0666,1.035);-webkit-text-stroke:0.3px #1c1e21;">$425.44</div>
<div class="t" id="t120" style="top:1268.50px;font-size:28px;line-height:28px;color:#1c1e21;right:234.26px;transform-origin:100% 84.65%;transform:scale(0.9869,1.035);-webkit-text-stroke:0.3px #1c1e21;">20.51</div>
<div class="t" id="t121" style="top:1268.50px;font-size:28px;line-height:28px;color:#1c1e21;right:39.80px;transform-origin:100% 84.65%;transform:scale(1.0039,1.035);-webkit-text-stroke:0.3px #1c1e21;">1.32</div>
<div class="a" style="left:0;top:1332px;width:2542px;height:130px;background:#fff;"></div>
<div class="t" id="t122" style="top:1350.50px;font-size:28px;line-height:28px;color:#1c1e21;font-weight:700;right:2324.34px;transform-origin:100% 84.65%;transform:scale(1.0774,1.035);-webkit-text-stroke:0.15px #1c1e21;">201</div>
<div class="t" id="t123" style="top:1391.68px;font-size:24px;line-height:24px;color:#747578;right:2323.70px;transform-origin:100% 84.65%;transform:scale(1.0857,1.020);-webkit-text-stroke:0.3px #747578;">Total</div>
<div class="t" id="t124" style="top:1350.50px;font-size:28px;line-height:28px;color:#1c1e21;font-weight:700;right:2093.92px;transform-origin:100% 84.65%;transform:scale(1.1069,1.035);-webkit-text-stroke:0.15px #1c1e21;">$1.30</div>
<div class="t" id="t125" style="top:1391.68px;font-size:24px;line-height:24px;color:#747578;right:2093.70px;transform-origin:100% 84.65%;transform:scale(1.0755,1.020);-webkit-text-stroke:0.3px #747578;">Per Action</div>
<div class="t" id="t126" style="top:1350.50px;font-size:28px;line-height:28px;color:#1c1e21;font-weight:700;right:1863.81px;transform-origin:100% 84.65%;transform:scale(1.1574,1.035);-webkit-text-stroke:0.15px #1c1e21;">$8.27</div>
<div class="t" id="t127" style="top:1391.68px;font-size:24px;line-height:24px;color:#747578;right:1863.70px;transform-origin:100% 84.65%;transform:scale(1.0755,1.020);-webkit-text-stroke:0.3px #747578;">Per Action</div>
<div class="t" id="t128" style="top:1350.50px;font-size:28px;line-height:28px;color:#1c1e21;font-weight:700;right:1633.81px;transform-origin:100% 84.65%;transform:scale(1.1560,1.035);-webkit-text-stroke:0.15px #1c1e21;">$6.27</div>
<div class="t" id="t129" style="top:1391.68px;font-size:24px;line-height:24px;color:#747578;right:1633.70px;transform-origin:100% 84.65%;transform:scale(1.0755,1.020);-webkit-text-stroke:0.3px #747578;">Per Action</div>
<div class="t" id="t130" style="top:1350.50px;font-size:28px;line-height:28px;color:#1c1e21;font-weight:700;right:1403.84px;transform-origin:100% 84.65%;transform:scale(1.1707,1.035);-webkit-text-stroke:0.15px #1c1e21;">$32.20</div>
<div class="t" id="t131" style="top:1391.68px;font-size:24px;line-height:24px;color:#747578;right:1403.70px;transform-origin:100% 84.65%;transform:scale(1.0755,1.020);-webkit-text-stroke:0.3px #747578;">Per Action</div>
<div class="t" id="t132" style="top:1350.50px;font-size:28px;line-height:28px;color:#1c1e21;font-weight:700;right:1173.89px;transform-origin:100% 84.65%;transform:scale(1.1242,1.035);-webkit-text-stroke:0.15px #1c1e21;">$14.90</div>
<div class="t" id="t133" style="top:1391.68px;font-size:24px;line-height:24px;color:#747578;right:1173.70px;transform-origin:100% 84.65%;transform:scale(1.0755,1.020);-webkit-text-stroke:0.3px #747578;">Per Action</div>
<div class="t" id="t134" style="top:1350.50px;font-size:28px;line-height:28px;color:#1c1e21;font-weight:700;right:707.88px;transform-origin:100% 84.65%;transform:scale(1.1736,1.035);-webkit-text-stroke:0.15px #1c1e21;">$2,994.89</div>
<div class="t" id="t135" style="top:1391.68px;font-size:24px;line-height:24px;color:#747578;right:707.70px;transform-origin:100% 84.65%;transform:scale(1.0539,1.020);-webkit-text-stroke:0.3px #747578;">Total Spent</div>
<div class="t" id="t136" style="top:1350.50px;font-size:28px;line-height:28px;color:#1c1e21;font-weight:700;right:470.12px;transform-origin:100% 84.65%;transform:scale(1.1394,1.035);-webkit-text-stroke:0.15px #1c1e21;">$15,064.08</div>
<div class="t" id="t137" style="top:1391.68px;font-size:24px;line-height:24px;color:#747578;right:469.70px;transform-origin:100% 84.65%;transform:scale(1.0857,1.020);-webkit-text-stroke:0.3px #747578;">Total</div>
<div class="t" id="t138" style="top:1350.50px;font-size:28px;line-height:28px;color:#1c1e21;font-weight:700;right:231.88px;transform-origin:100% 84.65%;transform:scale(1.1746,1.035);-webkit-text-stroke:0.15px #1c1e21;">5.03</div>
<div class="t" id="t139" style="top:1391.68px;font-size:24px;line-height:24px;color:#747578;right:231.70px;transform-origin:100% 84.65%;transform:scale(1.0182,1.020);-webkit-text-stroke:0.3px #747578;">Average</div>
<div class="t" id="t140" style="top:1350.50px;font-size:28px;line-height:28px;color:#1c1e21;font-weight:700;right:40.24px;transform-origin:100% 84.65%;transform:scale(1.0947,1.035);-webkit-text-stroke:0.15px #1c1e21;">1.45</div>
<div class="t" id="t141" style="top:1391.68px;font-size:24px;line-height:24px;color:#747578;right:39.70px;transform-origin:100% 84.65%;transform:scale(1.0291,1.020);-webkit-text-stroke:0.3px #747578;">Per Person</div>
<div class="a" style="left:4px;top:298px;width:2px;height:1158px;background:#d9dadd;"></div>
<div class="a" style="left:242px;top:298px;width:2px;height:1158px;background:#d9dadd;"></div>
<div class="a" style="left:472px;top:298px;width:2px;height:1158px;background:#d9dadd;"></div>
<div class="a" style="left:702px;top:298px;width:2px;height:1158px;background:#d9dadd;"></div>
<div class="a" style="left:932px;top:298px;width:2px;height:1158px;background:#d9dadd;"></div>
<div class="a" style="left:1162px;top:298px;width:2px;height:1158px;background:#d9dadd;"></div>
<div class="a" style="left:1392px;top:298px;width:2px;height:1158px;background:#d9dadd;"></div>
<div class="a" style="left:1582px;top:298px;width:2px;height:1158px;background:#d9dadd;"></div>
<div class="a" style="left:1858px;top:298px;width:2px;height:1158px;background:#d9dadd;"></div>
<div class="a" style="left:2096px;top:298px;width:2px;height:1158px;background:#d9dadd;"></div>
<div class="a" style="left:2334px;top:298px;width:2px;height:1158px;background:#d9dadd;"></div>
<div class="a" style="left:2526px;top:298px;width:2px;height:1158px;background:#d9dadd;"></div>
<div class="a" style="left:0;top:1330px;width:2542px;height:2px;background:#e4e4e4;"></div>
<div class="a" style="left:0;top:1456px;width:2542px;height:2px;background:#e4e4e4;"></div>
<div class="a" style="left:0;top:298px;width:2542px;height:2px;background:#cecfd1;"></div>
<div class="a" style="left:0;top:426px;width:2542px;height:2px;background:#cecece;"></div>
<div class="a" style="left:0;top:428px;width:2542px;height:9px;background:linear-gradient(rgba(0,0,0,0.105),rgba(0,0,0,0.045) 45%,rgba(0,0,0,0));"></div>
<div class="t" id="t142" style="top:350.50px;font-size:28px;line-height:28px;color:#1c1e21;font-weight:700;right:2324.40px;transform-origin:100% 84.65%;transform:scale(1.0300,1.050);-webkit-text-stroke:0.2px #1c1e21;">Purchases</div>
<div class="t" id="t143" style="top:318.50px;font-size:28px;line-height:28px;color:#1c1e21;font-weight:700;right:2094.40px;transform-origin:100% 84.65%;transform:scale(1.0393,1.050);-webkit-text-stroke:0.2px #1c1e21;">Cost per</div>
<div class="t" id="t144" style="top:350.50px;font-size:28px;line-height:28px;color:#1c1e21;font-weight:700;right:2094.40px;transform-origin:100% 84.65%;transform:scale(1.0501,1.050);-webkit-text-stroke:0.2px #1c1e21;">Content</div>
<div class="t" id="t145" style="top:382.50px;font-size:28px;line-height:28px;color:#1c1e21;font-weight:700;right:2094.40px;transform-origin:100% 84.65%;transform:scale(1.0437,1.050);-webkit-text-stroke:0.2px #1c1e21;">View</div>
<div class="t" id="t146" style="top:334.50px;font-size:28px;line-height:28px;color:#1c1e21;font-weight:700;right:1864.40px;transform-origin:100% 84.65%;transform:scale(1.0391,1.050);-webkit-text-stroke:0.2px #1c1e21;">Cost per add</div>
<div class="t" id="t147" style="top:366.50px;font-size:28px;line-height:28px;color:#1c1e21;font-weight:700;right:1864.40px;transform-origin:100% 84.65%;transform:scale(1.0590,1.050);-webkit-text-stroke:0.2px #1c1e21;">to cart</div>
<div class="t" id="t148" style="top:318.50px;font-size:28px;line-height:28px;color:#1c1e21;font-weight:700;right:1634.40px;transform-origin:100% 84.65%;transform:scale(1.0393,1.050);-webkit-text-stroke:0.2px #1c1e21;">Cost per</div>
<div class="t" id="t149" style="top:350.50px;font-size:28px;line-height:28px;color:#1c1e21;font-weight:700;right:1634.40px;transform-origin:100% 84.65%;transform:scale(1.0328,1.050);-webkit-text-stroke:0.2px #1c1e21;">checkout</div>
<div class="t" id="t150" style="top:382.50px;font-size:28px;line-height:28px;color:#1c1e21;font-weight:700;right:1634.40px;transform-origin:100% 84.65%;transform:scale(1.0731,1.050);-webkit-text-stroke:0.2px #1c1e21;">initiated</div>
<div class="t" id="t151" style="top:318.50px;font-size:28px;line-height:28px;color:#1c1e21;font-weight:700;right:1404.40px;transform-origin:100% 84.65%;transform:scale(1.0391,1.050);-webkit-text-stroke:0.2px #1c1e21;">Cost per add</div>
<div class="t" id="t152" style="top:350.50px;font-size:28px;line-height:28px;color:#1c1e21;font-weight:700;right:1404.40px;transform-origin:100% 84.65%;transform:scale(1.0473,1.050);-webkit-text-stroke:0.2px #1c1e21;">of payment</div>
<div class="t" id="t153" style="top:382.50px;font-size:28px;line-height:28px;color:#1c1e21;font-weight:700;right:1404.40px;transform-origin:100% 84.65%;transform:scale(1.0288,1.050);-webkit-text-stroke:0.2px #1c1e21;">info</div>
<div class="t" id="t154" style="top:334.50px;font-size:28px;line-height:28px;color:#1c1e21;font-weight:700;right:1174.40px;transform-origin:100% 84.65%;transform:scale(1.0393,1.050);-webkit-text-stroke:0.2px #1c1e21;">Cost per</div>
<div class="t" id="t155" style="top:366.50px;font-size:28px;line-height:28px;color:#1c1e21;font-weight:700;right:1174.40px;transform-origin:100% 84.65%;transform:scale(1.0339,1.050);-webkit-text-stroke:0.2px #1c1e21;">Purchase</div>
<div class="t" id="t156" style="top:350.50px;font-size:28px;line-height:28px;color:#1c1e21;font-weight:700;right:984.40px;transform-origin:100% 84.65%;transform:scale(1.0259,1.050);-webkit-text-stroke:0.2px #1c1e21;">Budget</div>
<div class="t" id="t157" style="top:350.50px;font-size:28px;line-height:28px;color:#1c1e21;font-weight:700;right:708.40px;transform-origin:100% 84.65%;transform:scale(1.0300,1.050);-webkit-text-stroke:0.2px #1c1e21;">Amount spent</div>
<div class="t" id="t158" style="top:318.50px;font-size:28px;line-height:28px;color:#1c1e21;font-weight:700;right:470.40px;transform-origin:100% 84.65%;transform:scale(1.0300,1.050);-webkit-text-stroke:0.2px #1c1e21;">Purchases</div>
<div class="t" id="t159" style="top:350.50px;font-size:28px;line-height:28px;color:#1c1e21;font-weight:700;right:470.40px;transform-origin:100% 84.65%;transform:scale(1.0093,1.050);-webkit-text-stroke:0.2px #1c1e21;">Conversion</div>
<div class="t" id="t160" style="top:382.50px;font-size:28px;line-height:28px;color:#1c1e21;font-weight:700;right:470.40px;transform-origin:100% 84.65%;transform:scale(1.0302,1.050);-webkit-text-stroke:0.2px #1c1e21;">Value</div>
<div class="t" id="t161" style="top:318.50px;font-size:28px;line-height:28px;color:#1c1e21;font-weight:700;right:232.40px;transform-origin:100% 84.65%;transform:scale(1.0339,1.050);-webkit-text-stroke:0.2px #1c1e21;">Purchase</div>
<div class="t" id="t162" style="top:350.50px;font-size:28px;line-height:28px;color:#1c1e21;font-weight:700;right:232.40px;transform-origin:100% 84.65%;transform:scale(1.0273,1.050);-webkit-text-stroke:0.2px #1c1e21;">ROAS (return</div>
<div class="t" id="t163" style="top:382.50px;font-size:28px;line-height:28px;color:#1c1e21;font-weight:700;right:232.40px;transform-origin:100% 84.65%;transform:scale(1.0383,1.050);-webkit-text-stroke:0.2px #1c1e21;">on ad spend)</div>
<div class="a" style="left:2336px;top:330px;width:166.3px;height:70px;overflow:hidden;"><div class="t" id="t164" style="top:20.50px;font-size:28px;line-height:28px;color:#1c1e21;font-weight:700;left:24.00px;transform-origin:0 84.65%;transform:scale(1.0321,1.050);-webkit-text-stroke:0.2px #1c1e21;">Frequency</div></div>
</div></body></html>
